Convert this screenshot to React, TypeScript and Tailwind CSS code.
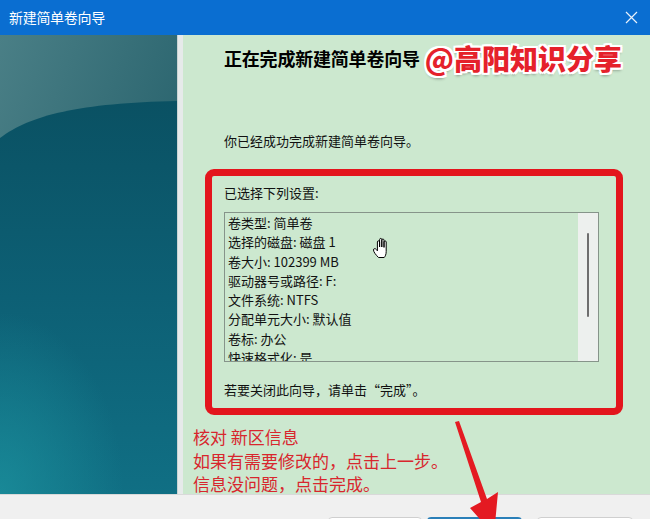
import React from "react";

const settings = [
  "卷类型: 简单卷",
  "选择的磁盘: 磁盘 1",
  "卷大小: 102399 MB",
  "驱动器号或路径: F:",
  "文件系统: NTFS",
  "分配单元大小: 默认值",
  "卷标: 办公",
  "快速格式化: 是",
];

const font = "font-['Microsoft_YaHei','Noto_Sans_CJK_SC','Noto_Sans',sans-serif]";

const SidePanel = () => (
  <div className="w-[177px] h-full shrink-0">
    <svg width="177" height="459" viewBox="0 0 177 459" className="block">
      <defs>
        <linearGradient id="topg" x1="0" y1="0" x2="1" y2="1">
          <stop offset="0" stopColor="#4a7f86" />
          <stop offset="0.6" stopColor="#2c6670" />
          <stop offset="1" stopColor="#245d68" />
        </linearGradient>
        <linearGradient id="bodyg" x1="0" y1="0" x2="0" y2="1">
          <stop offset="0" stopColor="#0a5163" />
          <stop offset="0.5" stopColor="#0d6075" />
          <stop offset="1" stopColor="#106f84" />
        </linearGradient>
        <radialGradient id="glow" cx="0" cy="1" r="0.7">
          <stop offset="0" stopColor="#1b8f9c" stopOpacity="0.8" />
          <stop offset="1" stopColor="#1b8f9c" stopOpacity="0" />
        </radialGradient>
      </defs>
      <rect width="177" height="459" fill="url(#topg)" />
      <path d="M0 103 C 30 80, 80 68, 177 66 L177 459 L0 459 Z" fill="url(#bodyg)" />
      <rect x="0" y="200" width="177" height="259" fill="url(#glow)" />
    </svg>
  </div>
);

const HandCursor = () => (
  <svg width="20" height="22" viewBox="0 0 20 22" className="absolute left-[147px] top-[24px]">
    <path
      d="M6.5 20.5 C4 18 1.5 15 1.5 13 C1.5 11.2 3.4 11.2 4.4 12.6 L5.4 13.8 L5.4 5 C5.4 3.4 7.6 3.4 7.6 5 L7.6 10 L7.6 2.6 C7.6 1 9.8 1 9.8 2.6 L9.8 10 L9.8 3.2 C9.8 1.6 12 1.6 12 3.2 L12 10.4 L12 5 C12 3.5 14.2 3.5 14.2 5 L14.2 14.5 C14.2 17.5 13.2 19.4 12.2 20.5 Z"
      fill="#fff"
      stroke="#000"
      strokeWidth="1"
      strokeLinejoin="round"
    />
  </svg>
);

export default function App() {
  return (
    <div className={`relative w-[650px] h-[519px] overflow-hidden bg-[#f0f0f0] ${font}`}>
      {/* title bar */}
      <div className="h-[35px] bg-[#0a6ed1] flex items-center justify-between pl-[9px] pr-[12px]">
        <span className="text-white text-[14px] tracking-[-0.3px]">新建简单卷向导</span>
        <svg width="13" height="13" viewBox="0 0 13 13">
          <path d="M1 1 L12 12 M12 1 L1 12" stroke="#e8f1fb" strokeWidth="1.2" />
        </svg>
      </div>

      {/* body */}
      <div className="flex h-[459px]">
        <SidePanel />
        <div className="w-[6px] h-full bg-[#e6eaea] border-l border-[#c9d3d3]" />
        <div className="flex-1 h-full bg-[#cce8cf] overflow-hidden">
          <div className="flex items-center pl-[41px] pt-[9px]">
            <h1 className="text-[18px] font-bold text-black leading-[22px] tracking-[-0.2px]">正在完成新建简单卷向导</h1>
            <span className="ml-[5px] text-[28px] leading-[28px] font-black text-[#e5212b] [text-shadow:-2px_-2px_0_#fff,2px_-2px_0_#fff,-2px_2px_0_#fff,2px_2px_0_#fff,0_2px_0_#fff,2px_0_0_#fff,0_-2px_0_#fff,-2px_0_0_#fff,0_3px_3px_rgba(0,0,0,0.35)]">
              @高阳知识分享
            </span>
          </div>

          <p className="pl-[41px] mt-[59px] text-[13px] leading-[20px] text-[#111]">你已经成功完成新建简单卷向导。</p>

          <div className="ml-[22px] mt-[18px] w-[418px] h-[246px] border-[7px] border-[#e3151d] rounded-[9px] pl-[12px] pt-[7px]">
            <p className="text-[13px] leading-[20px] text-[#111]">已选择下列设置:</p>
            <div className="relative mt-[9px] w-[375px] h-[150px] border border-[#86948a] flex overflow-hidden">
              <div className="flex-1 pl-[3px] text-[13px] leading-[19.3px] text-[#111]">
                {settings.map((s) => (
                  <div key={s} className="whitespace-nowrap">{s}</div>
                ))}
              </div>
              <div className="w-[20px] h-full bg-[#edf0ee] flex justify-center pt-[20px]">
                <div className="w-[1.5px] h-[84px] bg-[#6e6e6e] rounded-full" />
              </div>
              <HandCursor />
            </div>
            <p className="mt-[18px] text-[13px] leading-[20px] text-[#111]">若要关闭此向导，请单击“完成”。</p>
          </div>

          <div className="pl-[10px] mt-[10px] text-[17px] leading-[23.5px] text-[#d8262d]">
            <p>核对 新区信息</p>
            <p>如果有需要修改的，点击上一步。</p>
            <p>信息没问题，点击完成。</p>
          </div>
        </div>
      </div>

      {/* bottom button bar */}
      <div className="h-[25px] border-t border-[#d9d9d9] flex justify-end pr-[17px] overflow-hidden">
        <div className="mt-[22px] w-[94px] h-[30px] bg-white border border-[#cfcfcf] rounded-[4px]" />
        <div className="mt-[22px] ml-[5px] w-[95px] h-[30px] bg-white border-2 border-[#2a7fb8] rounded-[4px]" />
        <div className="mt-[22px] ml-[15px] w-[96px] h-[30px] bg-white border border-[#cfcfcf] rounded-[4px]" />
      </div>

      {/* annotation arrow */}
      <svg width="650" height="519" viewBox="0 0 650 519" className="absolute inset-0 pointer-events-none">
        <polygon
          points="455,422 459,421 487,499 498,492 494,535 470,508 481,502"
          fill="#e41a22"
        />
      </svg>
    </div>
  );
}
